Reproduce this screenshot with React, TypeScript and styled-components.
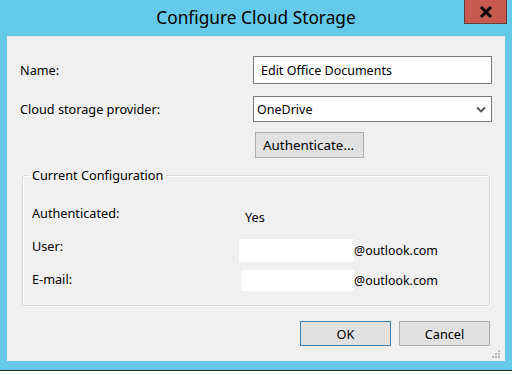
import React from "react";
import styled, { createGlobalStyle } from "styled-components";

const Global = createGlobalStyle`
  html, body { margin: 0; padding: 0; background: #ffffff; }
  body { font-family: "Noto Sans", "Open Sans", sans-serif; font-size: 12.7px; color: #000; }
  * { box-sizing: border-box; }
`;

const Screen = styled.div`
  width: 512px;
  height: 375px;
  background: #ffffff;
  overflow: hidden;
`;

const Frame = styled.div`
  width: 512px;
  height: 371px;
  background: #65caea;
  border-bottom: 1px solid #2a2a2a;
  padding: 0 7px;
  display: flex;
  flex-direction: column;
`;

const TitleBar = styled.div`
  height: 36px;
  display: grid;
  grid-template-columns: 1fr auto 1fr;
  align-items: start;
`;

const Title = styled.div`
  grid-column: 2;
  font-size: 17.3px;
  line-height: 22px;
  padding-top: 7px;
  color: #000;
  white-space: nowrap;
`;

const CloseButton = styled.div`
  grid-column: 3;
  justify-self: end;
  margin-right: -2px;
  width: 43px;
  height: 24px;
  background: #c75a4e;
  border: 1px solid #6d3a33;
  border-top: none;
  display: flex;
  align-items: center;
  justify-content: center;
`;

const Client = styled.div`
  height: 325px;
  background: #f0f0f0;
  border-top: 1px solid #e4e4e4;
  position: relative;
  padding: 19px 15px 0 13px;
  display: flex;
  flex-direction: column;
`;

const FormGrid = styled.div`
  display: grid;
  grid-template-columns: 233px 239px;
  row-gap: 12px;
  align-items: center;
`;

const Label = styled.div`
  line-height: 16px;
  white-space: nowrap;
`;

const Field = styled.div<{ $h: number }>`
  height: ${(p) => p.$h}px;
  background: #ffffff;
  border: 1px solid #7a7a7a;
  display: flex;
  align-items: center;
  justify-content: space-between;
  padding: 0 6px 0 7px;
  font-size: 12.5px;
`;

const SelectField = styled(Field)`
  padding: 0 5px 0 3px;
`;

const ButtonRow = styled.div`
  grid-column: 2;
  margin-top: -2px;
`;

const Button = styled.div<{ $w: number; $h: number; $default?: boolean }>`
  width: ${(p) => p.$w}px;
  height: ${(p) => p.$h}px;
  background: #e1e1e1;
  border: 1px solid ${(p) => (p.$default ? "#3c7fb1" : "#adadad")};
  display: flex;
  align-items: center;
  justify-content: center;
`;

const AuthButton = styled(Button)`
  margin-left: 2px;
  justify-content: flex-start;
  padding-left: 7px;
  font-size: 13.4px;
`;

const Group = styled.fieldset`
  margin: 9px 0 0 2px;
  width: 468px;
  height: 139px;
  border: 1px solid #d9d9d9;
  border-radius: 3px;
  box-shadow: inset 1px 1px 0 #ffffff, 1px 1px 0 #ffffff;
  padding: 22px 0 0 9px;
  display: flex;
  flex-direction: column;
  gap: 17px;
`;

const Legend = styled.legend`
  margin-left: -3px;
  padding: 0 3px;
  line-height: 16px;
`;

const InfoRow = styled.div`
  display: grid;
  grid-template-columns: 207px auto;
  align-items: start;
  height: 16px;
`;

const Value = styled.div<{ $mt: number; $ml: number }>`
  margin-top: ${(p) => p.$mt}px;
  margin-left: ${(p) => p.$ml}px;
  display: flex;
  align-items: center;
  line-height: 16px;
  white-space: nowrap;
`;

const Redact = styled.div<{ $w: number; $h: number }>`
  width: ${(p) => p.$w}px;
  height: ${(p) => p.$h}px;
  background: #ffffff;
`;

const Email = styled.span`
  margin-top: 1px;
  font-size: 12.4px;
`;

const Footer = styled.div`
  margin-top: 15px;
  display: flex;
  justify-content: flex-end;
  gap: 8px;
`;

const Grip = styled.svg`
  position: absolute;
  right: 5px;
  bottom: 3px;
`;

export default function App() {
  return (
    <>
      <Global />
      <Screen>
        <Frame>
          <TitleBar>
            <Title>Configure Cloud Storage</Title>
            <CloseButton>
              <svg width="14" height="12" viewBox="0 0 14 12">
                <path d="M2 1 L12 11 M12 1 L2 11" stroke="#000" strokeWidth="3" />
              </svg>
            </CloseButton>
          </TitleBar>
          <Client>
            <FormGrid>
              <Label>Name:</Label>
              <Field $h={28}>Edit Office Documents</Field>
              <Label>Cloud storage provider:</Label>
              <SelectField $h={26}>
                <span>OneDrive</span>
                <svg width="10" height="7" viewBox="0 0 10 7">
                  <path d="M1 1.5 L5 5.5 L9 1.5" stroke="#555" strokeWidth="1.8" fill="none" />
                </svg>
              </SelectField>
              <ButtonRow>
                <AuthButton $w={109} $h={26}>Authenticate...</AuthButton>
              </ButtonRow>
            </FormGrid>
            <Group>
              <Legend>Current Configuration</Legend>
              <InfoRow>
                <Label>Authenticated:</Label>
                <Value $mt={4} $ml={6}>Yes</Value>
              </InfoRow>
              <InfoRow>
                <Label>User:</Label>
                <Value $mt={1} $ml={0}>
                  <Redact $w={115} $h={23} />
                  <Email>@outlook.com</Email>
                </Value>
              </InfoRow>
              <InfoRow>
                <Label>E-mail:</Label>
                <Value $mt={-1} $ml={2}>
                  <Redact $w={113} $h={21} />
                  <Email>@outlook.com</Email>
                </Value>
              </InfoRow>
            </Group>
            <Footer>
              <Button $w={91} $h={25} $default>OK</Button>
              <Button $w={91} $h={25}>Cancel</Button>
            </Footer>
            <Grip width="9" height="9" viewBox="0 0 9 9">
              <g fill="#b8b8b8">
                <rect x="7" y="1" width="2" height="2" />
                <rect x="4" y="4" width="2" height="2" />
                <rect x="7" y="4" width="2" height="2" />
                <rect x="1" y="7" width="2" height="2" />
                <rect x="4" y="7" width="2" height="2" />
                <rect x="7" y="7" width="2" height="2" />
              </g>
            </Grip>
          </Client>
        </Frame>
      </Screen>
    </>
  );
}
